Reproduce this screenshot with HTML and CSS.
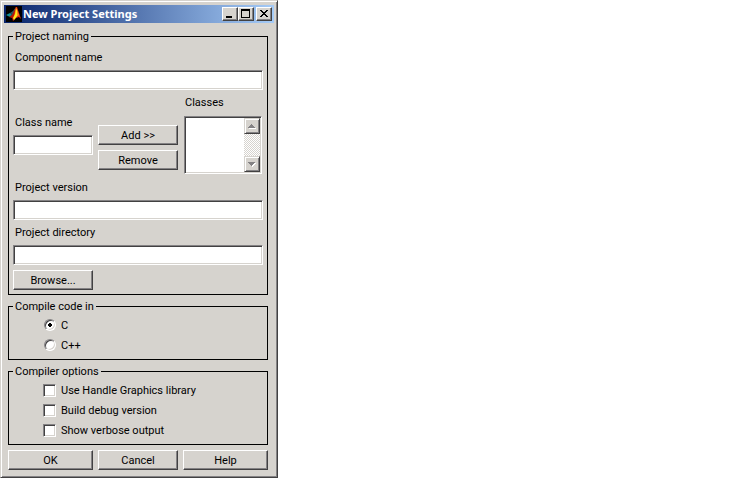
FILE: index.html
```html
<!DOCTYPE html>
<html lang="en">
<head>
<meta charset="utf-8">
<title>New Project Settings</title>
<link rel="stylesheet" href="styles.css">
</head>
<body>
<main class="window">
  <header class="titlebar">
    <svg class="app-icon" viewBox="0 0 16 16" aria-hidden="true">
      <rect width="16" height="16" fill="#000"/>
      <path d="M0 9L4 7L6 8L4 11Z" fill="#109098"/>
      <path d="M4 7L7 5L10 1L9 6L6 10L4 11L6 8Z" fill="#2c5860"/>
      <path d="M3 11L6 9L8 5L10 1L11 2L9 9L7 15L6 12Z" fill="#b81808"/>
      <path d="M10 1L11 1L13 7L15 13L13 11L10 12L7 15L8 9Z" fill="#e83010"/>
      <path d="M10 2L11 4L12 9L8 14L7 12L9 8Z" fill="#ffe818"/>
      <path d="M11 4L13 9L12 10L11 9Z" fill="#f89018"/>
    </svg>
    <h1 class="title">New Project Settings</h1>
    <div class="controls">
      <button class="control" type="button" aria-label="Minimize"><svg viewBox="0 0 12 10"><path d="M2 7h6v2h-6z"/></svg></button>
      <button class="control" type="button" aria-label="Maximize"><svg viewBox="0 0 12 10"><path fill-rule="evenodd" d="M1 0h9v9h-9zM2 2v6h7v-6z"/></svg></button>
      <button class="control close" type="button" aria-label="Close"><svg viewBox="0 0 12 10"><path d="M2 1h2v1h1v1h2v-1h1v-1h2v1h-1v1h-1v1h-1v1h1v1h1v1h1v1h-2v-1h-1v-1h-2v1h-1v1h-2v-1h1v-1h1v-1h1v-1h-1v-1h-1v-1h-1z"/></svg></button>
    </div>
  </header>
  <form class="settings">
    <fieldset class="group">
      <legend>Project naming</legend>
      <label class="caption" for="component">Component name</label>
      <input class="field" id="component" type="text">
      <div class="class-row">
        <div class="class-name">
          <label class="caption" for="class">Class name</label>
          <input class="field" id="class" type="text">
        </div>
        <div class="class-actions">
          <button class="button" type="button">Add &gt;&gt;</button>
          <button class="button" type="button">Remove</button>
        </div>
        <div class="class-list">
          <label class="caption" for="classes">Classes</label>
          <div class="listbox">
            <select id="classes" size="3"></select>
            <div class="scrollbar">
              <button class="arrow" type="button" aria-label="Scroll up"><svg viewBox="0 0 12 12"><path class="shine" d="M3 8h7v1h-7z"/><path d="M5 4h1v1h1v1h1v1h1v1h-7v-1h1v-1h1v-1h1z"/></svg></button>
              <button class="arrow" type="button" aria-label="Scroll down"><svg viewBox="0 0 12 12"><path class="shine" d="M9 5h1v1h-1v1h-1v1h-1v1h-1v-2z"/><path d="M2 4h7v1h-1v1h-1v1h-1v1h-1v-1h-1v-1h-1v-1h-1z"/></svg></button>
            </div>
          </div>
        </div>
      </div>
      <label class="caption" for="version">Project version</label>
      <input class="field" id="version" type="text">
      <label class="caption" for="directory">Project directory</label>
      <input class="field" id="directory" type="text">
      <button class="button browse" type="button">Browse...</button>
    </fieldset>
    <fieldset class="group">
      <legend>Compile code in</legend>
      <label class="option"><input type="radio" name="language" checked>C</label>
      <label class="option"><input type="radio" name="language">C++</label>
    </fieldset>
    <fieldset class="group">
      <legend>Compiler options</legend>
      <label class="option"><input type="checkbox">Use Handle Graphics library</label>
      <label class="option"><input type="checkbox">Build debug version</label>
      <label class="option"><input type="checkbox">Show verbose output</label>
    </fieldset>
    <div class="footer">
      <button class="button" type="button">OK</button>
      <button class="button" type="button">Cancel</button>
      <button class="button" type="button">Help</button>
    </div>
  </form>
</main>
</body>
</html>
```
FILE: styles.css
```css
:root {
  --face: #d6d3ce;
  --shade: #848284;
  --dark: #424142;
}

* {
  box-sizing: border-box;
}

body {
  margin: 0;
  background: #fff;
  color: #000;
  font: 11px/13px Roboto, "Liberation Sans", Arial, sans-serif;
}

button,
input,
select {
  margin: 0;
  padding: 0;
  border-radius: 0;
  color: inherit;
  font: inherit;
}

svg {
  display: block;
  shape-rendering: crispEdges;
}

.window {
  max-width: 278px;
  padding: 4px 3px 7px;
  border: 1px solid;
  border-color: var(--face) var(--dark) var(--dark) var(--face);
  background: var(--face);
  box-shadow: inset 1px 1px #fff, inset -1px -1px var(--shade);
}

.titlebar {
  display: flex;
  align-items: center;
  height: 18px;
  padding: 0 2px;
  background: linear-gradient(to right, #08246b, #a5cbf7);
}

.app-icon {
  width: 16px;
  height: 16px;
  shape-rendering: auto;
}

.title {
  flex: 1;
  margin: 0 0 0 1px;
  color: #fff;
  font: bold 11px/16px "Noto Sans", Tahoma, sans-serif;
  white-space: nowrap;
}

.controls {
  display: flex;
}

.control,
.arrow,
.button {
  border: 1px solid;
  border-color: #fff var(--dark) var(--dark) #fff;
  background: var(--face);
  box-shadow: inset -1px -1px var(--shade);
}

.control {
  width: 16px;
  height: 14px;
  padding: 1px;
}

.control svg {
  width: 12px;
  height: 10px;
}

.close {
  margin-left: 2px;
}

.settings {
  padding: 7px 6px 0 4px;
}

.group {
  min-width: 0;
  margin: 0 0 5px;
  padding: 2px 4px 4px;
  border: 1px solid #000;
}

.group legend {
  padding: 0 2px;
}

.caption {
  display: block;
  padding: 6px 2px;
}

.field,
.listbox {
  display: block;
  width: 100%;
  border: 1px solid;
  border-color: var(--shade) #fff #fff var(--shade);
  background: #fff;
  box-shadow: inset 1px 1px var(--dark), inset -1px -1px var(--face);
}

.field {
  height: 20px;
  padding: 2px 4px;
}

.class-row {
  display: grid;
  grid-template-columns: repeat(3, 1fr);
  column-gap: 5px;
  align-items: end;
}

.class-name {
  padding-bottom: 20px;
}

.class-actions {
  display: grid;
  row-gap: 5px;
  padding-bottom: 5px;
}

.class-list {
  padding: 0 1px 1px;
}

.class-list .caption {
  padding: 6px 1px 7px;
}

.listbox {
  display: flex;
  height: 58px;
  padding: 1px;
}

.listbox select {
  flex: 1;
  min-width: 0;
  border: 0;
  background: transparent;
  outline: 0;
  overflow: hidden;
}

.scrollbar {
  display: flex;
  flex-direction: column;
  justify-content: space-between;
  background: repeating-conic-gradient(#fff 0 25%, var(--face) 0 50%) 0 0 / 2px 2px;
}

.arrow {
  width: 16px;
  height: 16px;
  padding: 1px;
  border-color: var(--face) var(--dark) var(--dark) var(--face);
  box-shadow: inset 1px 1px #fff, inset -1px -1px var(--shade);
}

.arrow svg {
  width: 12px;
  height: 12px;
  fill: var(--shade);
}

.arrow .shine {
  fill: #fff;
}

.button {
  height: 20px;
  text-align: center;
}

.browse {
  display: block;
  width: 80px;
  margin-top: 5px;
}

.option {
  display: flex;
  align-items: center;
  gap: 5px;
  height: 20px;
  padding-left: 30px;
}

.option input {
  appearance: none;
  width: 13px;
  height: 13px;
  border: 1px solid;
  border-color: var(--shade) #fff #fff var(--shade);
  background: #fff;
  box-shadow: inset 1px 1px var(--dark), inset -1px -1px var(--face);
}

.option input[type="radio"] {
  width: 12px;
  height: 12px;
  margin-left: 1px;
  border-radius: 50%;
}

.option input[type="radio"]:checked {
  background: radial-gradient(circle, #000 2px, #fff 2px);
}

.option input[type="checkbox"]:checked {
  background: linear-gradient(#000, #000) center / 6px 6px no-repeat #fff;
}

.footer {
  display: grid;
  grid-template-columns: 85fr 80fr 85fr;
  column-gap: 5px;
}
```
